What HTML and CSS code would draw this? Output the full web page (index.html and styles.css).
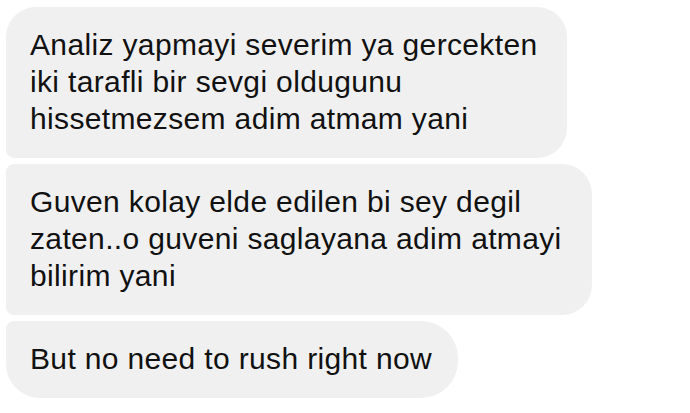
FILE: index.html
```html
<!DOCTYPE html>
<html>
<head>
<meta charset="utf-8">
<link rel="stylesheet" href="styles.css">
</head>
<body>
<div class="thread">
  <div class="bubble first">Analiz yapmayi severim ya gercekten<br>iki tarafli bir sevgi oldugunu<br>hissetmezsem adim atmam yani</div>
  <div class="bubble middle">Guven kolay elde edilen bi sey degil<br>zaten..o guveni saglayana adim atmayi<br>bilirim yani</div>
  <div class="bubble last">But no need to rush right now</div>
</div>
</body>
</html>
```
FILE: styles.css
```css
html, body {
  margin: 0;
  padding: 0;
  background: #ffffff;
}
.thread {
  display: flex;
  flex-direction: column;
  align-items: flex-start;
  gap: 6px;
  padding: 7px 0 0 6px;
}
.bubble {
  background: #f0f0f0;
  color: #111;
  font-family: "Liberation Sans", Arial, sans-serif;
  font-size: 30px;
  line-height: 37px;
  letter-spacing: 0.35px;
  padding: 19px 30px 21px 24px;
  white-space: nowrap;
  border-radius: 8px 30px 30px 8px;
}
.bubble.first {
  border-radius: 30px 30px 30px 8px;
}
.bubble.last {
  border-radius: 8px 37px 37px 34px;
  padding-right: 26px;
}
```
